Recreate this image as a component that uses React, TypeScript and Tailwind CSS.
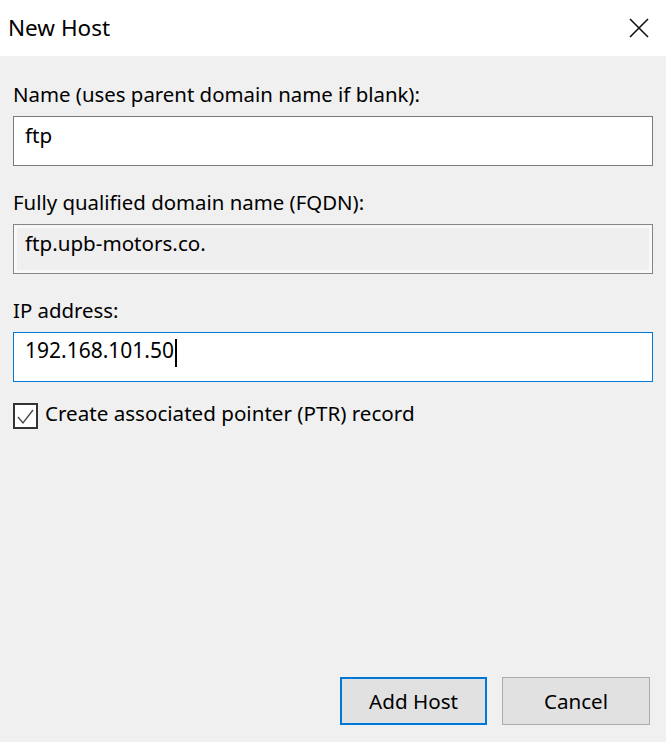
import React from 'react';

const font = { fontFamily: '"Noto Sans", "Open Sans", Arial, sans-serif' };

const Label: React.FC<{ children: React.ReactNode }> = ({ children }) => (
  <div className="h-[28px] leading-[28px] text-[20.4px] text-black">{children}</div>
);

const NewHostDialog: React.FC = () => {
  return (
    <div
      className="w-[666px] h-[742px] bg-[#f0f0f0] flex flex-col text-black overflow-hidden"
      style={font}
    >
      {/* title bar */}
      <div className="h-[56px] bg-white flex items-center justify-between pl-[8px] pr-[16px] shrink-0">
        <span className="text-[22.5px] leading-[28px]">New Host</span>
        <svg width="20" height="20" viewBox="0 0 20 20" className="mr-[1px]">
          <path d="M1 1 L19 19 M19 1 L1 19" stroke="#111" strokeWidth="1.6" fill="none" />
        </svg>
      </div>

      <div className="px-[13px] pt-[24px] flex flex-col">
        <Label>Name (uses parent domain name if blank):</Label>
        <div className="mt-[8px] h-[50px] bg-white border border-[#7a7a7a] pl-[11px] pt-[8px]">
          <span className="text-[20.6px] leading-[20px]">ftp</span>
        </div>

        <div className="mt-[22px]">
          <Label>Fully qualified domain name (FQDN):</Label>
        </div>
        <div className="mt-[8px] h-[50px] border border-[#868686] bg-[#efefef]">
          <div className="h-full border-[3px] border-[#f8f8f8] pl-[8px] pt-[5px]">
            <span className="text-[20.6px] leading-[20px]">ftp.upb-motors.co.</span>
          </div>
        </div>

        <div className="mt-[22px]">
          <Label>IP address:</Label>
        </div>
        <div className="mt-[8px] h-[50px] bg-white border border-[#0078d7] pl-[11px] pt-[7px] flex items-start">
          <span className="text-[21px] leading-[20px]">192.168.101.50</span>
          <span className="ml-[1px] mt-[-1px] w-[2px] h-[28px] bg-black" />
        </div>

        <label className="mt-[21px] flex items-start gap-[7px]">
          <span className="w-[25px] h-[26px] border-2 border-[#333333] bg-white flex items-center justify-center shrink-0">
            <svg width="21" height="22" viewBox="0 0 21 22">
              <path d="M3 12 L8 18 L18 5" stroke="#4a4a4a" strokeWidth="1.4" fill="none" />
            </svg>
          </span>
          <span className="text-[20.6px] leading-[22px] mt-[-1px]">
            Create associated pointer (PTR) record
          </span>
        </label>
      </div>

      <div className="flex-1" />

      <div className="flex justify-end gap-[15px] pr-[16px] pb-[17px]">
        <button className="w-[147px] h-[48px] bg-[#e1e1e1] border-2 border-[#0078d7] text-[20.6px]">
          Add Host
        </button>
        <button className="w-[148px] h-[48px] bg-[#e1e1e1] border border-[#adadad] text-[20.6px]">
          Cancel
        </button>
      </div>
    </div>
  );
};

export default function App() {
  return <NewHostDialog />;
}
